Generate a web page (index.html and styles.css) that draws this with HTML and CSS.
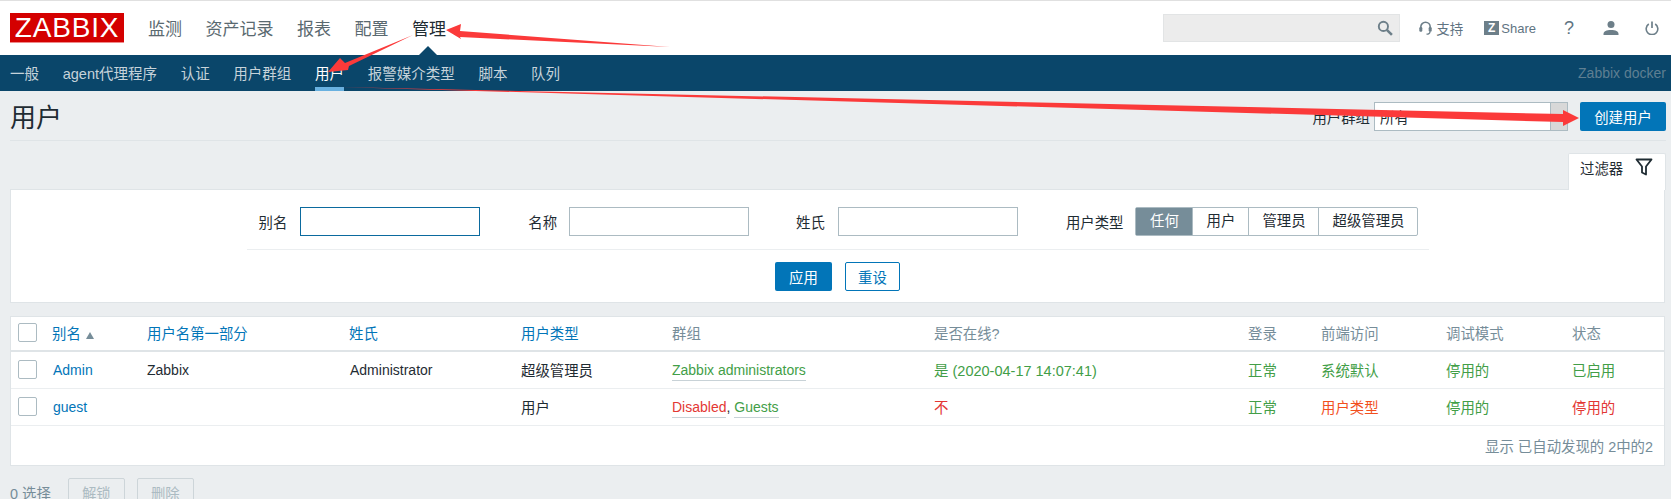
FILE: index.html
```html
<!DOCTYPE html>
<html lang="zh-CN">
<head>
    <meta charset="UTF-8">
    <title>用户</title>
    <link rel="stylesheet" href="styles.css">
</head>
<body>
    <header class="top-nav">
        <div class="logo">ZABBIX</div>
        <nav class="main-menu">
            <a>监测</a>
            <a>资产记录</a>
            <a>报表</a>
            <a>配置</a>
            <a class="active">管理</a>
        </nav>
        <div class="top-tools">
            <div class="search-box">
                <svg viewBox="0 0 15 15" width="16" height="16"><circle cx="6" cy="6" r="4.300" fill="none" stroke="#6d7f89" stroke-width="1.800"/><path d="M9.200 9.200l4.800 4.800" stroke="#6d7f89" stroke-width="2.400"/></svg>
            </div>
            <a class="tool support">
                <svg viewBox="0 0 13 14" width="13" height="14"><path d="M1.800 8V6a4.700 4.700 0 0 1 9.400 0v2" fill="none" stroke="#6d7f89" stroke-width="1.600"/><rect x="0.300" y="6" width="3" height="4.800" rx="1.200" fill="#6d7f89"/><rect x="9.700" y="6" width="3" height="4.800" rx="1.200" fill="#6d7f89"/><path d="M11 10.500c0 2-1.500 2.700-3.500 2.700" fill="none" stroke="#6d7f89" stroke-width="1.300"/></svg>
                <span>支持</span>
            </a>
            <a class="tool share"><span class="z-box">Z</span>Share</a>
            <a class="tool help">?</a>
            <a class="tool user">
                <svg viewBox="0 0 16 14" width="16" height="14"><circle cx="8" cy="3.600" r="3.500" fill="#6d7f89"/><path d="M0.500 14v-1c0-2.800 3-4 7.500-4s7.500 1.200 7.500 4v1z" fill="#6d7f89"/></svg>
            </a>
            <a class="tool power">
                <svg viewBox="0 0 14 14" width="14" height="14"><path d="M3.800 3a5.800 5.800 0 1 0 6.400 0" fill="none" stroke="#6d7f89" stroke-width="1.600"/><path d="M7 0.500v6.500" stroke="#6d7f89" stroke-width="1.700"/></svg>
            </a>
        </div>
    </header>

    <div class="sub-nav">
        <nav class="sub-menu">
            <a>一般</a>
            <a>agent代理程序</a>
            <a>认证</a>
            <a>用户群组</a>
            <a class="active">用户</a>
            <a>报警媒介类型</a>
            <a>脚本</a>
            <a>队列</a>
        </nav>
        <span class="server-name">Zabbix docker</span>
    </div>

    <main class="content">
        <div class="title-bar">
            <h1>用户</h1>
            <div class="title-controls">
                <label>用户群组</label>
                <div class="select-box"><span>所有</span><i class="select-arrow"></i></div>
                <button class="btn btn-primary btn-create">创建用户</button>
            </div>
        </div>

        <div class="filter-tabs">
            <div class="filter-tab">
                过滤器
                <svg viewBox="0 0 18 18" width="18" height="18"><path d="M1.500 1.500h15l-5.500 7v8l-4-2v-6z" fill="none" stroke="#1f2c33" stroke-width="1.800" stroke-linejoin="round"/></svg>
            </div>
        </div>

        <section class="filter-panel">
            <div class="filter-fields">
                <label>别名</label>
                <input class="text-input focused" type="text">
                <label class="next">名称</label>
                <input class="text-input tight" type="text">
                <label class="next-short">姓氏</label>
                <input class="text-input" type="text">
                <label class="next">用户类型</label>
                <div class="radio-group">
                    <span class="active seg-any">任何</span>
                    <span class="seg-user">用户</span>
                    <span class="seg-admin">管理员</span>
                    <span class="seg-super">超级管理员</span>
                </div>
            </div>
            <div class="filter-actions">
                <button class="btn btn-primary">应用</button>
                <button class="btn btn-outline">重设</button>
            </div>
        </section>

        <section class="list-panel">
            <table class="user-table">
                <colgroup>
                    <col class="c-check"><col class="c-alias"><col class="c-name"><col class="c-surname"><col class="c-type"><col class="c-group"><col class="c-online"><col class="c-login"><col class="c-front"><col class="c-debug"><col class="c-status">
                </colgroup>
                <thead>
                    <tr>
                        <th><span class="checkbox"></span></th>
                        <th><a>别名</a><i class="sort-up"></i></th>
                        <th><a>用户名第一部分</a></th>
                        <th><a>姓氏</a></th>
                        <th><a>用户类型</a></th>
                        <th class="plain">群组</th>
                        <th class="plain">是否在线?</th>
                        <th class="plain">登录</th>
                        <th class="plain">前端访问</th>
                        <th class="plain">调试模式</th>
                        <th class="plain">状态</th>
                    </tr>
                </thead>
                <tbody>
                    <tr>
                        <td><span class="checkbox"></span></td>
                        <td class="latin nudge"><a>Admin</a></td>
                        <td class="latin">Zabbix</td>
                        <td class="latin nudge">Administrator</td>
                        <td>超级管理员</td>
                        <td class="latin"><a class="group green">Zabbix administrators</a></td>
                        <td class="green date">是 (2020-04-17 14:07:41)</td>
                        <td class="green">正常</td>
                        <td class="green">系统默认</td>
                        <td class="green">停用的</td>
                        <td class="green">已启用</td>
                    </tr>
                    <tr>
                        <td><span class="checkbox"></span></td>
                        <td class="latin nudge"><a>guest</a></td>
                        <td></td>
                        <td></td>
                        <td>用户</td>
                        <td class="latin"><a class="group red">Disabled</a>, <a class="group green">Guests</a></td>
                        <td class="red">不</td>
                        <td class="green">正常</td>
                        <td class="orange">用户类型</td>
                        <td class="green">停用的</td>
                        <td class="red">停用的</td>
                    </tr>
                </tbody>
            </table>
            <div class="table-stats">显示 已自动发现的 2中的2</div>
        </section>

        <div class="action-bar">
            <span class="selected-count">0 选择</span>
            <button class="btn btn-disabled">解锁</button>
            <button class="btn btn-disabled">删除</button>
        </div>
    </main>

    <svg class="arrows" viewBox="0 0 1671 499" width="1671" height="499">
        <polygon points="670,47 460,37 461,39 446,30 461,24 460,31" fill="#fb3a3a"/>
        <polygon points="413,35 345,63 340,58 328,72 348,70 349,66" fill="#fb3a3a"/>
        <polygon points="339,87 1563,114 1563,110 1579,118 1563,126 1563,122" fill="#fb3a3a"/>
    </svg>
</body>
</html>
```

FILE: styles.css
```css
html, body {
    margin: 0;
    height: 499px;
    overflow: hidden;
}
body {
    position: relative;
    background: #ebeef0;
    color: #1f2c33;
    font-family: "Liberation Sans", "Noto Sans CJK SC", sans-serif;
    font-size: 14.4px;
}
a { color: inherit; text-decoration: none; }

/* top header */
.top-nav {
    display: flex;
    align-items: center;
    height: 54px;
    background: #fff;
    border-top: 1px solid #e0e0e0;
    padding: 0 12px 0 10px;
}
.logo {
    box-sizing: border-box;
    width: 114px;
    height: 30px;
    background: #d40000;
    border-bottom: 1px solid #ee8a8a;
    color: #fff;
    font-size: 28px;
    letter-spacing: 0.8px;
    line-height: 29px;
    text-align: center;
}
.main-menu {
    display: flex;
    gap: 23.5px;
    margin: 4px 0 0 24px;
    font-size: 17px;
    line-height: 26px;
    color: #5a6970;
}
.main-menu a.active {
    position: relative;
    color: #1f2c33;
}
.main-menu a.active::after {
    content: "";
    position: absolute;
    left: 7px;
    top: 29px;
    border: 9px solid transparent;
    border-top: 0;
    border-bottom-color: #0a466a;
}
.top-tools {
    display: flex;
    align-items: center;
    margin-left: auto;
    color: #5f7482;
}
.search-box {
    display: flex;
    align-items: center;
    justify-content: flex-end;
    box-sizing: border-box;
    width: 237px;
    height: 28px;
    padding-right: 6px;
    background: #ececec;
    border: 1px solid #e2e4e5;
}
.tool {
    display: flex;
    align-items: center;
    font-size: 13.5px;
}
.support { margin-left: 19px; gap: 4px; }
.share { margin-left: 21px; gap: 2px; font-size: 13px; }
.z-box {
    width: 15px;
    height: 14px;
    background: #6d7f89;
    color: #fff;
    font-size: 12px;
    font-weight: bold;
    line-height: 14px;
    text-align: center;
}
.help { margin-left: 28px; font-size: 18px; }
.user { margin-left: 29px; }
.power { margin-left: 26px; }

/* second menu row */
.sub-nav {
    display: flex;
    align-items: center;
    justify-content: space-between;
    height: 36px;
    padding: 0 5px 0 10px;
    background: #0a466a;
}
.sub-menu {
    display: flex;
    gap: 23.7px;
    margin-bottom: 2px;
    font-size: 14.5px;
    color: #c6d3da;
}
.sub-menu a {
    position: relative;
}
.sub-menu a.active {
    color: #fff;
}
.sub-menu a.active::after {
    content: "";
    position: absolute;
    left: 0;
    right: 0;
    bottom: -8px;
    height: 4px;
    background: #69b1e0;
}
.server-name {
    color: #5e7f92;
    font-size: 14px;
}

/* page */
.content {
    padding: 0 5px 0 10px;
}
.title-bar {
    display: flex;
    align-items: center;
    justify-content: space-between;
    box-sizing: border-box;
    height: 50px;
    border-bottom: 1px solid #dfe4e7;
}
.title-bar h1 {
    margin: 0;
    font-size: 26px;
    font-weight: normal;
    color: #1f2c33;
}
.title-controls {
    display: flex;
    align-items: center;
    margin-top: 2px;
}
.select-box {
    display: flex;
    justify-content: space-between;
    box-sizing: border-box;
    width: 194px;
    height: 29px;
    margin-left: 4px;
    background: #fff;
    border: 1px solid #acbbc2;
    line-height: 30px;
}
.select-box span { padding-left: 5px; }
.select-arrow {
    width: 16px;
    background: #d8d8d8;
    border-left: 1px solid #acbbc2;
}
.btn {
    box-sizing: border-box;
    height: 29px;
    padding: 0;
    border: 1px solid transparent;
    border-radius: 2px;
    font: inherit;
}
.btn-primary {
    width: 57px;
    background: #0275b8;
    color: #fff;
}
.btn-create {
    width: 86px;
    margin-left: 12px;
}
.btn-outline {
    width: 55px;
    background: #fff;
    border-color: #0275b8;
    color: #0275b8;
}
.btn-disabled {
    width: 57px;
    background: #ebeef0;
    border-color: #cdd5d9;
    color: #acbbc2;
}

/* filter */
.filter-tabs {
    display: flex;
    justify-content: flex-end;
    margin-top: 12px;
}
.filter-tab {
    display: flex;
    align-items: center;
    gap: 12px;
    box-sizing: border-box;
    width: 98px;
    height: 37px;
    padding: 0 0 10px 11px;
    background: #fff;
    border: 1px solid #dfe4e7;
    border-bottom: 0;
    border-radius: 2px 2px 0 0;
    margin-bottom: -1px;
    position: relative;
}
.filter-panel {
    box-sizing: border-box;
    height: 114px;
    width: 1655px;
    background: #fff;
    border: 1px solid #dfe4e7;
}
.filter-fields {
    display: flex;
    align-items: center;
    box-sizing: border-box;
    width: 1182px;
    height: 60px;
    margin: 0 auto;
    padding: 4px 0 0 12px;
    border-bottom: 1px solid #ebeef0;
}
.filter-fields .next { margin-left: 48px; }
.filter-fields .next-short { margin-left: 47px; }
.text-input {
    box-sizing: border-box;
    width: 180px;
    height: 29px;
    margin-left: 13px;
    border: 1px solid #acbbc2;
    background: #fff;
}
.text-input.tight {
    margin-left: 12px;
}
.text-input.focused {
    border-color: #0b6a9e;
}
.radio-group {
    display: flex;
    box-sizing: border-box;
    height: 29px;
    margin-left: 12px;
    border: 1px solid #acbbc2;
    border-radius: 2px;
    line-height: 27px;
    text-align: center;
}
.radio-group span + span {
    border-left: 1px solid #acbbc2;
}
.radio-group .active {
    background: #768d99;
    color: #fff;
}
.seg-any { width: 56px; }
.seg-user { width: 55px; }
.seg-admin { width: 69px; }
.seg-super { width: 98px; }
.filter-actions {
    display: flex;
    justify-content: center;
    gap: 13px;
    margin-top: 12px;
}

/* table */
.list-panel {
    box-sizing: border-box;
    width: 1655px;
    height: 150px;
    margin-top: 13px;
    background: #fff;
    border: 1px solid #dfe4e7;
}
.user-table {
    width: 1653px;
    table-layout: fixed;
    border-collapse: collapse;
}
.c-check { width: 34px; }
.c-alias { width: 95px; }
.c-name { width: 202px; }
.c-surname { width: 172px; }
.c-type { width: 151px; }
.c-group { width: 262px; }
.c-online { width: 314px; }
.c-login { width: 73px; }
.c-front { width: 125px; }
.c-debug { width: 126px; }
.c-status { width: 99px; }
.user-table th,
.user-table td {
    padding: 0 0 1px 7px;
    text-align: left;
    font-weight: normal;
}
.user-table th {
    height: 31px;
    padding-bottom: 2px;
    border-bottom: 2px solid #dfe4e7;
}
.user-table td {
    height: 35px;
    border-bottom: 1px solid #ebeef0;
}
.user-table td.latin { font-size: 14px; }
.user-table td.nudge { padding-left: 8px; }
.user-table td.date { font-size: 14.5px; }
.user-table a { color: #0275b8; }
.user-table th.plain { color: #768d99; }
.checkbox {
    display: block;
    box-sizing: border-box;
    width: 19px;
    height: 19px;
    border: 1px solid #acbbc2;
    border-radius: 2px;
}
.sort-up {
    display: inline-block;
    margin-left: 5px;
    border: 4px solid transparent;
    border-top: 0;
    border-bottom: 7px solid #768d99;
}
.green, .user-table a.green { color: #429e47; }
.red, .user-table a.red { color: #e33734; }
.orange { color: #f24f1d; }
.group {
    padding-bottom: 2px;
    border-bottom: 1px solid #c8d2d7;
}
.table-stats {
    padding: 9px 11px 0 0;
    text-align: right;
    color: #768d99;
}

/* bottom */
.action-bar {
    display: flex;
    align-items: center;
    margin-top: 12px;
    color: #768d99;
}
.action-bar .btn { margin-left: 12px; }
.action-bar .btn:first-of-type { margin-left: 17px; }

/* red annotation arrows drawn over the screenshot */
.arrows {
    position: absolute;
    left: 0;
    top: 0;
    pointer-events: none;
}
```
